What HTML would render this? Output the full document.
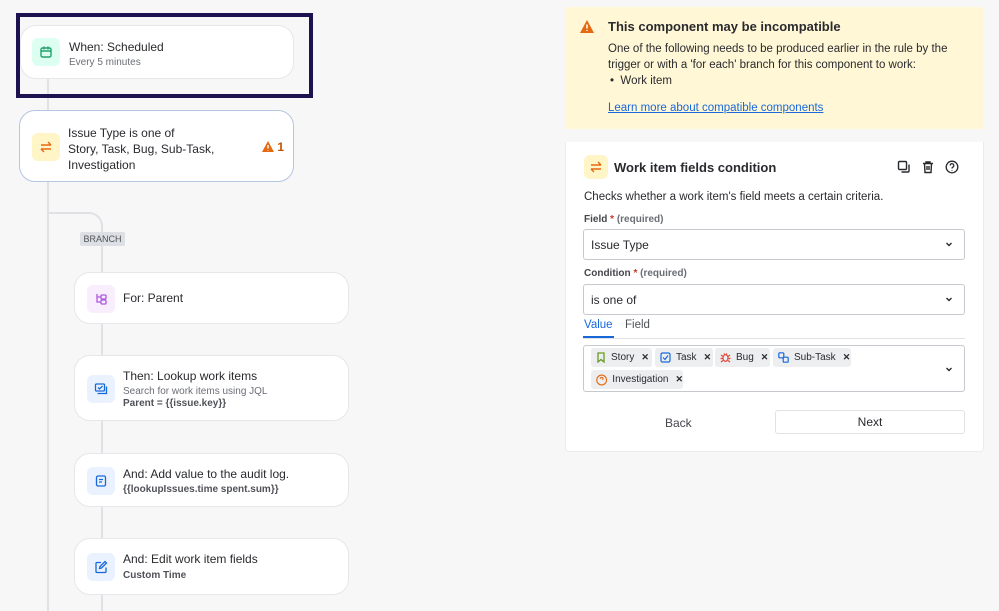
<!DOCTYPE html>
<html><head><meta charset="utf-8"><style>
*{box-sizing:border-box;margin:0;padding:0}
body{width:999px;height:611px;background:#f7f7f8;font-family:"Liberation Sans",sans-serif;color:#292a2e;position:relative;overflow:hidden}
.a{position:absolute}
.card{position:absolute;background:#fff;border:1px solid #e6e7ea;border-radius:16px}
.ic{position:absolute;width:28px;height:28px;border-radius:6px;display:flex;align-items:center;justify-content:center}
.t{position:absolute;font-size:12px;color:#292a2e;white-space:nowrap}
.s{font-size:10px;color:#6b6e76}
.b{font-size:10px;color:#505258;font-weight:bold}
.lbl{font-size:10px;font-weight:bold;color:#44464c}
.lbl i{font-style:normal;color:#c9372c}
.lbl span{color:#6b6e76}
.sel{position:absolute;left:583px;width:382px;height:31px;border:1px solid #c7c9ce;border-radius:3px;background:#fff;font-size:12px;padding:8px 0 0 7px}
.chev{position:absolute;right:10px;top:9px}
.chip{position:absolute;height:19px;background:#eceef0;border-radius:3px;font-size:10px;color:#292a2e;display:flex;align-items:center;padding-left:5px;gap:5px;white-space:nowrap;overflow:hidden}
.chip b{font-size:9px;margin-left:2px}
</style></head><body>

<div class="a" style="left:47px;top:78px;width:2px;height:533px;background:#dfe1e5"></div>
<div class="a" style="left:48px;top:212px;width:55px;height:30px;border-top:2px solid #dfe1e5;border-right:2px solid #dfe1e5;border-top-right-radius:14px"></div>
<div class="a" style="left:101px;top:240px;width:2px;height:371px;background:#dfe1e5"></div>

<div class="a" style="left:16px;top:13px;width:297px;height:85px;border:4px solid #1e1150"></div>

<div class="card" style="left:20px;top:25px;width:274px;height:54px">
  <div class="ic" style="left:11px;top:12px;background:#dcfff1"><svg width="14" height="14" viewBox="0 0 14 14" fill="none" stroke="#22a06b" stroke-width="1.4"><rect x="2" y="3" width="10" height="9" rx="1.5"/><path d="M2 6h10M5 1.5v3M9 1.5v3"/></svg></div>
  <div class="t" style="left:48px;top:14px">When: Scheduled</div>
  <div class="t s" style="left:48px;top:31px">Every 5 minutes</div>
</div>

<div class="card" style="left:19px;top:110px;width:275px;height:72px;border-color:#b4c6e0">
  <div class="ic" style="left:12px;top:22px;background:#fff5c6"><svg width="14" height="14" viewBox="0 0 14 14" fill="none" stroke="#e56910" stroke-width="1.4"><path d="M2 5h10M9 2l3 3M12 9H2M5 12l-3-3"/></svg></div>
  <div class="t" style="left:48px;top:14px;line-height:16px">Issue Type is one of<br>Story, Task, Bug, Sub-Task,<br>Investigation</div>
  <div class="a" style="left:242px;top:29px;font-size:12px;color:#c25100;font-weight:bold"><svg width="12" height="11" viewBox="0 0 12 11" style="vertical-align:-1px"><path d="M6 0L12 11H0Z" fill="#e56910"/><path d="M6 4v3.5M6 9v.5" stroke="#fff" stroke-width="1.4"/></svg> 1</div>
</div>

<div class="a" style="left:80px;top:232px;width:45px;height:14px;background:#dcdfe4;border-radius:2px;font-size:9px;color:#505258;text-align:center;line-height:14px">BRANCH</div>

<div class="card" style="left:74px;top:272px;width:275px;height:52px">
  <div class="ic" style="left:12px;top:12px;background:#f8eefe"><svg width="14" height="14" viewBox="0 0 14 14" fill="none" stroke="#af59e1" stroke-width="1.3"><path d="M3 2v8h4M3 5h4"/><rect x="7" y="3" width="5" height="4" rx="1"/><rect x="7" y="8" width="5" height="4" rx="1"/></svg></div>
  <div class="t" style="left:48px;top:18px">For: Parent</div>
</div>

<div class="card" style="left:74px;top:355px;width:275px;height:66px">
  <div class="ic" style="left:12px;top:19px;background:#e9f2fe"><svg width="14" height="14" viewBox="0 0 14 14" fill="none" stroke="#1868db" stroke-width="1.3"><rect x="1.5" y="2" width="9" height="7" rx="1"/><path d="M4 5.5l1.5 1.5 3-3M3.5 11.5h9v-7"/></svg></div>
  <div class="t" style="left:48px;top:13px">Then: Lookup work items</div>
  <div class="t s" style="left:48px;top:30px">Search for work items using JQL</div>
  <div class="t b" style="left:48px;top:42px">Parent = {{issue.key}}</div>
</div>

<div class="card" style="left:74px;top:453px;width:275px;height:54px">
  <div class="ic" style="left:12px;top:13px;background:#e9f2fe"><svg width="14" height="14" viewBox="0 0 14 14" fill="none" stroke="#1868db" stroke-width="1.3"><rect x="2.5" y="2" width="9" height="10" rx="1.5"/><path d="M5 5.5h4M5 8h3"/></svg></div>
  <div class="t" style="left:48px;top:13px">And: Add value to the audit log.</div>
  <div class="t b" style="left:48px;top:30px">{{lookupIssues.time spent.sum}}</div>
</div>

<div class="card" style="left:74px;top:538px;width:275px;height:57px">
  <div class="ic" style="left:12px;top:14px;background:#e9f2fe"><svg width="14" height="14" viewBox="0 0 14 14" fill="none" stroke="#1868db" stroke-width="1.3"><path d="M7 2.5H3a1 1 0 00-1 1v8a1 1 0 001 1h8a1 1 0 001-1V7.5"/><path d="M5.5 8.5l.5-2 5-5 1.5 1.5-5 5z"/></svg></div>
  <div class="t" style="left:48px;top:13px">And: Edit work item fields</div>
  <div class="t b" style="left:48px;top:31px">Custom Time</div>
</div>

<div class="a" style="left:565px;top:7px;width:419px;height:445px;background:#fff;border:1px solid #ebecf0;border-radius:4px"></div>
<div class="a" style="left:565px;top:7px;width:419px;height:122px;background:#fff7d6;border-radius:4px 4px 0 0"></div>
<div class="a" style="left:565px;top:129px;width:419px;height:13px;background:#f7f7f8"></div>
<svg class="a" style="left:580px;top:20px" width="14" height="13" viewBox="0 0 14 13"><path d="M7 0L14 13H0Z" fill="#e56910"/><path d="M7 4.5v4M7 10v1" stroke="#fff" stroke-width="1.6"/></svg>
<div class="t" style="left:608px;top:19px;font-size:13px;font-weight:bold">This component may be incompatible</div>
<div class="t" style="left:608px;top:41px;font-size:11.5px;line-height:16px">One of the following needs to be produced earlier in the rule by the<br>trigger or with a 'for each' branch for this component to work:</div>
<div class="t" style="left:610px;top:75px;font-size:11.5px">•&nbsp; Work item</div>
<div class="t" style="left:608px;top:102px;font-size:11.5px;color:#1868db;text-decoration:underline">Learn more about compatible components</div>

<div class="ic" style="left:584px;top:155px;width:24px;height:24px;background:#fff5c6"><svg width="14" height="14" viewBox="0 0 14 14" fill="none" stroke="#e56910" stroke-width="1.4"><path d="M2 5h10M9 2l3 3M12 9H2M5 12l-3-3"/></svg></div>
<div class="t" style="left:614px;top:160px;font-size:13px;font-weight:bold">Work item fields condition</div>
<svg class="a" style="left:897px;top:160px" width="14" height="14" viewBox="0 0 14 14" fill="none" stroke="#292a2e" stroke-width="1.4"><rect x="1.5" y="1.5" width="8" height="8" rx="1"/><path d="M12 4.5v6.5a1 1 0 01-1 1H4.5"/></svg>
<svg class="a" style="left:921px;top:160px" width="14" height="14" viewBox="0 0 14 14" fill="none" stroke="#292a2e" stroke-width="1.4"><path d="M2 3.5h10M5 3.5V2h4v1.5M3.5 3.5l.5 9h6l.5-9M6 6v4M8 6v4"/></svg>
<svg class="a" style="left:945px;top:160px" width="14" height="14" viewBox="0 0 14 14" fill="none" stroke="#292a2e" stroke-width="1.3"><circle cx="7" cy="7" r="5.8"/><path d="M5.2 5.5a1.8 1.8 0 113 1.3c-.8.5-1.2.8-1.2 1.7M7 10v.6"/></svg>

<div class="t" style="left:584px;top:191px;font-size:11.5px">Checks whether a work item's field meets a certain criteria.</div>
<div class="t lbl" style="left:584px;top:214px">Field <i>*</i> <span>(required)</span></div>
<div class="sel" style="top:229px;height:31px">Issue Type<svg class="chev" width="10" height="10" viewBox="0 0 10 10" fill="none" stroke="#292a2e" stroke-width="1.4"><path d="M2.5 4l2.5 2.5L7.5 4"/></svg></div>
<div class="t lbl" style="left:584px;top:268px">Condition <i>*</i> <span>(required)</span></div>
<div class="sel" style="top:284px;height:31px">is one of<svg class="chev" width="10" height="10" viewBox="0 0 10 10" fill="none" stroke="#292a2e" stroke-width="1.4"><path d="M2.5 4l2.5 2.5L7.5 4"/></svg></div>
<div class="t" style="left:584px;top:319px;font-size:11.5px;color:#1868db">Value</div>
<div class="t" style="left:625px;top:319px;font-size:11.5px;color:#505258">Field</div>
<div class="a" style="left:583px;top:338px;width:382px;height:1px;background:#dfe1e5"></div>
<div class="a" style="left:583px;top:336px;width:31px;height:2px;background:#1868db"></div>
<div class="sel" style="top:345px;height:47px;padding:0"><svg class="chev" style="top:18px" width="10" height="10" viewBox="0 0 10 10" fill="none" stroke="#292a2e" stroke-width="1.4"><path d="M2.5 4l2.5 2.5L7.5 4"/></svg></div>
<div class="chip" style="left:591px;top:348px;width:61px"><svg width="10" height="11" viewBox="0 0 10 11" fill="none" stroke="#6a9a23" stroke-width="1.3"><path d="M2 1h6v9L5 7.5 2 10z"/></svg>Story<b>✕</b></div>
<div class="chip" style="left:655px;top:348px;width:58px"><svg width="11" height="11" viewBox="0 0 11 11" fill="none" stroke="#1868db" stroke-width="1.2"><rect x="1" y="1" width="9" height="9" rx="1.5"/><path d="M3 5.5l2 2 3-4"/></svg>Task<b>✕</b></div>
<div class="chip" style="left:715px;top:348px;width:55px"><svg width="11" height="11" viewBox="0 0 11 11" fill="none" stroke="#e2483d" stroke-width="1.2"><ellipse cx="5.5" cy="6" rx="2.5" ry="3.3"/><path d="M1 3l2 1.5M10 3L8 4.5M0.5 6.5h2.5M8 6.5h2.5M1 10l2-1.5M10 10L8 8.5M4 1.5l1 1.2M7 1.5l-1 1.2"/></svg>Bug<b>✕</b></div>
<div class="chip" style="left:773px;top:348px;width:78px"><svg width="11" height="11" viewBox="0 0 11 11" fill="none" stroke="#1868db" stroke-width="1.2"><rect x="0.8" y="0.8" width="5" height="5" rx="1"/><rect x="5.2" y="5.2" width="5" height="5" rx="1"/></svg>Sub-Task<b>✕</b></div>
<div class="chip" style="left:591px;top:370px;width:92px"><svg width="12" height="12" viewBox="0 0 12 12" fill="none" stroke="#e56910" stroke-width="1.2"><circle cx="6" cy="6" r="5.2"/><path d="M4.5 4.8a1.5 1.5 0 112.4 1.1c-.6.4-.9.6-1.3M6 8.6v.5"/></svg>Investigation<b>✕</b></div>

<div class="t" style="left:665px;top:416px;font-size:12px;color:#44464c">Back</div>
<div class="a" style="left:775px;top:410px;width:190px;height:24px;border:1px solid #e1e2e5;border-radius:3px;background:#fff;font-size:12px;color:#292a2e;text-align:center;line-height:22px">Next</div>

</body></html>
